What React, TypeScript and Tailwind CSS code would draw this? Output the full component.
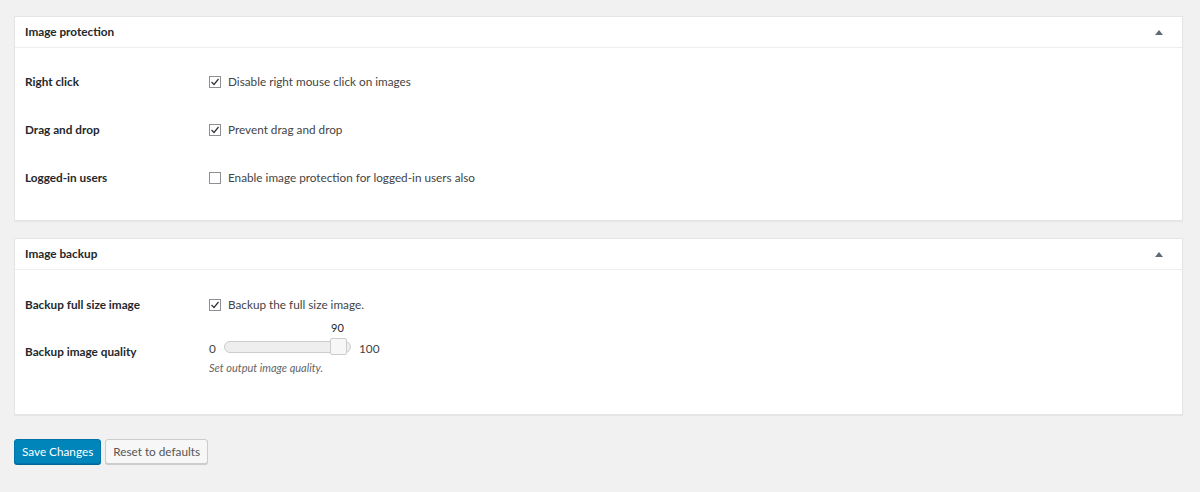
import React from "react";

const font = { fontFamily: 'Lato, "Noto Sans", sans-serif' };

function Check({ checked }: { checked: boolean }) {
  return (
    <span className="w-[12px] h-[12px] border border-[#8c8f94] bg-white flex items-center justify-center shrink-0">
      {checked && (
        <svg width="10" height="10" viewBox="0 0 10 10">
          <path d="M1.5 5 L4 7.5 L8.5 2" stroke="#333" strokeWidth="1.2" fill="none" />
        </svg>
      )}
    </span>
  );
}

function Header({ title }: { title: string }) {
  return (
    <div className="h-[31px] border-b border-[#eeeeee] flex items-center justify-between pl-[10px] pr-[19px]">
      <span className="text-[11.75px] font-bold text-[#23282d]">{title}</span>
      <svg width="8" height="5" viewBox="0 0 8 5">
        <path d="M0 5 L4 0 L8 5 Z" fill="#606a73" />
      </svg>
    </div>
  );
}

function Row({ label, text, checked, h }: { label: string; text: string; checked: boolean; h: string }) {
  return (
    <div className={`flex items-center ${h}`}>
      <div className="w-[184px] text-[11.75px] font-bold text-[#23282d]">{label}</div>
      <label className="flex items-center gap-[7px] text-[11.75px] text-[#444]">
        <Check checked={checked} />
        {text}
      </label>
    </div>
  );
}

export default function App() {
  return (
    <div className="min-h-[492px] bg-[#f1f1f1] pt-[16px] pl-[14px] pr-[17px]" style={font}>
      <div className="bg-white border border-[#e5e5e5] shadow-[0_1px_1px_rgba(0,0,0,0.04)]">
        <Header title="Image protection" />
        <div className="pl-[10px] pt-[10px] pb-[18px]">
          <Row h="h-[48px]" label="Right click" text="Disable right mouse click on images" checked />
          <Row h="h-[48px]" label="Drag and drop" text="Prevent drag and drop" checked />
          <Row h="h-[48px]" label="Logged-in users" text="Enable image protection for logged-in users also" checked={false} />
        </div>
      </div>

      <div className="mt-[17px] bg-white border border-[#e5e5e5] shadow-[0_1px_1px_rgba(0,0,0,0.04)]">
        <Header title="Image backup" />
        <div className="pl-[10px] pt-[18px] pb-[38px]">
          <Row h="h-[33px]" label="Backup full size image" text="Backup the full size image." checked />
          <div className="flex">
            <div className="w-[184px] pt-[23px] leading-[16px] text-[11.75px] font-bold text-[#23282d]">
              Backup image quality
            </div>
            <div className="flex flex-col">
              <div className="h-[14px] leading-[14px] text-[11px] text-[#23282d] pl-[122px]">90</div>
              <div className="mt-[3px] h-[18px] flex items-center text-[11.75px] text-[#444]">
                <span className="w-[15px] pt-[3px]">0</span>
                <div className="relative w-[127px] h-[12px] rounded-full border border-[#cccccc] bg-[#eeeeee]">
                  <div className="absolute left-[105px] top-[-4px] w-[17px] h-[17px] rounded-[2px] border border-[#cccccc] bg-[#f7f7f7]" />
                </div>
                <span className="ml-[8px] pt-[3px]">100</span>
              </div>
              <div className="mt-[4px] leading-[16px] text-[11px] italic text-[#666]">Set output image quality.</div>
            </div>
          </div>
        </div>
      </div>

      <div className="mt-[24px] flex gap-[4px]">
        <button className="h-[25px] px-[7px] rounded-[3px] bg-[#0085ba] border border-[#0073aa] shadow-[0_1px_0_#006799] text-white text-[11.75px]">
          Save Changes
        </button>
        <button className="h-[25px] px-[7px] rounded-[3px] bg-[#f7f7f7] border border-[#cccccc] shadow-[0_1px_0_#cccccc] text-[#555] text-[11.75px]">
          Reset to defaults
        </button>
      </div>
    </div>
  );
}
